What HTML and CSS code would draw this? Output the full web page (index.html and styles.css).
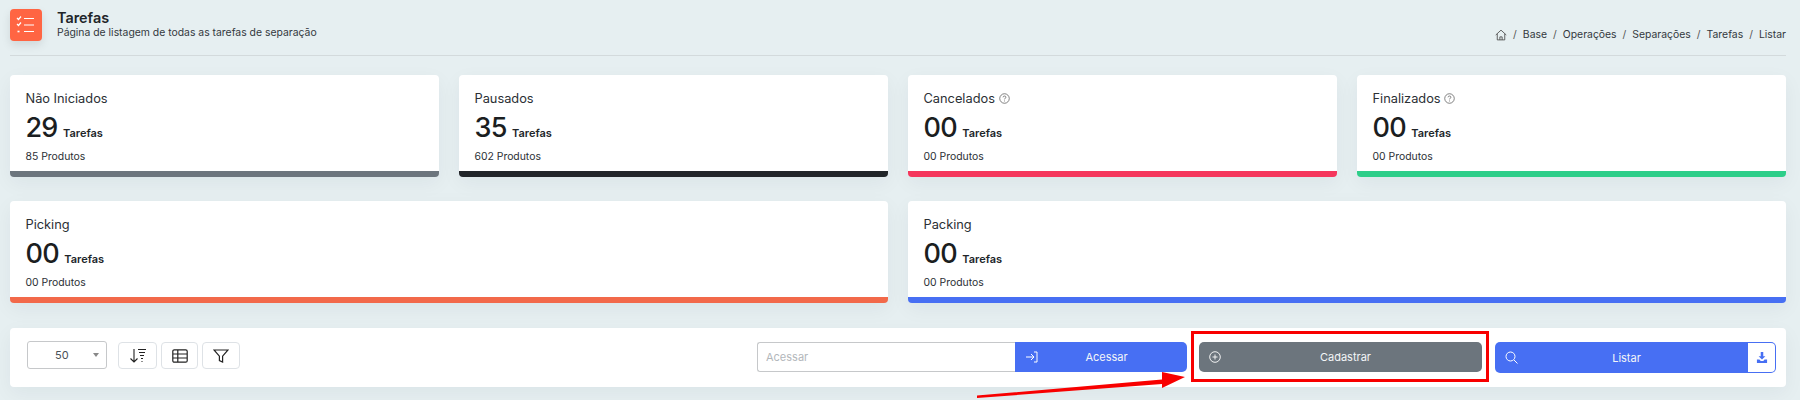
FILE: index.html
```html
<!DOCTYPE html>
<html lang="pt-BR">
<head>
<meta charset="utf-8">
<title>Tarefas</title>
<link rel="stylesheet" href="styles.css">
</head>
<body>
<main class="page">
  <header class="head">
    <div class="head-icon">
      <svg width="20" height="20" viewBox="0 0 20 20" fill="none" stroke="#fff" stroke-width="1.2">
        <path d="M1 3l1.5 1.5L5 1.5M1 9l1.5 1.5L5 7.5"/>
        <path d="M8 3.5h10M8 10h10M8 16.5h10"/>
        <path d="M1.5 16.5h2" stroke-width="1.6"/>
      </svg>
    </div>
    <div class="head-text">
      <h1>Tarefas</h1>
      <p>Página de listagem de todas as tarefas de separação</p>
    </div>
    <nav class="crumbs">
      <svg width="12" height="12" viewBox="0 0 16 16" fill="none" stroke="#444" stroke-width="1.1"><path d="M1 8l7-6.5L15 8M3 6.5V14.5h10V6.5M6.5 14.5v-4h3v4"/></svg>
      <span class="sep">/</span><span>Base</span>
      <span class="sep">/</span><span>Operações</span>
      <span class="sep">/</span><span>Separações</span>
      <span class="sep">/</span><span>Tarefas</span>
      <span class="sep">/</span><span>Listar</span>
    </nav>
  </header>

  <section class="cards">
    <article class="card bar-gray">
      <h2>Não Iniciados</h2>
      <div class="count"><strong>29</strong><b>Tarefas</b></div>
      <small>85 Produtos</small>
    </article>
    <article class="card bar-black">
      <h2>Pausados</h2>
      <div class="count"><strong>35</strong><b>Tarefas</b></div>
      <small>602 Produtos</small>
    </article>
    <article class="card bar-red">
      <h2>Cancelados <svg class="help" width="11" height="11" viewBox="0 0 12 12" fill="none" stroke="#555" stroke-width=".8"><circle cx="6" cy="6" r="5.2"/><path d="M4.4 4.7C4.4 2.9 7.6 2.9 7.6 4.6 7.6 5.7 6 5.7 6 7M6 8.2v1"/></svg></h2>
      <div class="count"><strong>00</strong><b>Tarefas</b></div>
      <small>00 Produtos</small>
    </article>
    <article class="card bar-green">
      <h2>Finalizados <svg class="help" width="11" height="11" viewBox="0 0 12 12" fill="none" stroke="#555" stroke-width=".8"><circle cx="6" cy="6" r="5.2"/><path d="M4.4 4.7C4.4 2.9 7.6 2.9 7.6 4.6 7.6 5.7 6 5.7 6 7M6 8.2v1"/></svg></h2>
      <div class="count"><strong>00</strong><b>Tarefas</b></div>
      <small>00 Produtos</small>
    </article>
    <article class="card wide bar-orange">
      <h2>Picking</h2>
      <div class="count"><strong>00</strong><b>Tarefas</b></div>
      <small>00 Produtos</small>
    </article>
    <article class="card wide bar-blue">
      <h2>Packing</h2>
      <div class="count"><strong>00</strong><b>Tarefas</b></div>
      <small>00 Produtos</small>
    </article>
  </section>

  <section class="toolbar">
    <div class="tools">
      <div class="select"><span>50</span><i class="caret"></i></div>
      <div class="icon-btns">
        <button class="icon-btn sort" type="button">
          <svg width="18" height="16" viewBox="0 0 18 16" fill="none" stroke="#222" stroke-width="1.1"><path d="M5 1v13M1.5 10.5L5 14l3.5-3.5"/><path d="M9 1.5h8M10 4.5h6M11 7.5h4M12 10.5h2M12.5 13.5h1"/></svg>
        </button>
        <button class="icon-btn grid" type="button">
          <svg width="16" height="14" viewBox="0 0 16 14" fill="none" stroke="#222" stroke-width="1.2"><rect x=".8" y=".8" width="14.4" height="12.4" rx="1.5"/><path d="M1 5h14M1 9h14M5.8 1v12"/></svg>
        </button>
        <button class="icon-btn filter" type="button">
          <svg width="16" height="14" viewBox="0 0 16 14" fill="none" stroke="#222" stroke-width="1.2"><path d="M1 1h14L9.6 7.2V13L6.4 11.5V7.2z"/></svg>
        </button>
      </div>
    </div>
    <div class="access">
      <input class="access-input" type="text" placeholder="Acessar">
      <button class="btn btn-blue access-btn" type="button">
        <svg width="13" height="12" viewBox="0 0 13 12" fill="none" stroke="#fff" stroke-width="1"><path d="M1 6h8M6 3l3 3-3 3M9 1h3v10H9"/></svg>
        <span>Acessar</span>
      </button>
    </div>
    <div class="register">
      <button class="btn btn-gray" type="button">
        <svg width="12" height="12" viewBox="0 0 12 12" fill="none" stroke="#fff" stroke-width=".9"><circle cx="6" cy="6" r="5.3"/><path d="M6 3.5v5M3.5 6h5"/></svg>
        <span>Cadastrar</span>
      </button>
    </div>
    <div class="listing">
      <button class="btn btn-blue list-btn" type="button">
        <svg width="13" height="13" viewBox="0 0 13 13" fill="none" stroke="#fff" stroke-width="1"><circle cx="5.5" cy="5.5" r="4.5"/><path d="M9 9l3.5 3.5"/></svg>
        <span>Listar</span>
      </button>
      <button class="download" type="button">
        <svg width="12" height="11" viewBox="0 0 12 13" fill="#476ff3"><path d="M4.5 0h3v5H10L6 9 2 5h2.5z"/><path d="M0 9h3l1.5 1.5h3L9 9h3v4H0z"/></svg>
      </button>
    </div>
    <div class="highlight"></div>
    <svg class="arrow" width="215" height="30" viewBox="0 0 215 30"><path d="M0 25.5L185 9.5 185 2 208 7 185 18 185 14 0 28z" fill="#f80000"/></svg>
  </section>
</main>
</body>
</html>
```
FILE: styles.css
```css
* { box-sizing: border-box; }
html, body { margin: 0; height: 400px; overflow: hidden; }
body {
  background: #e6eff1;
  font-family: Inter, "Liberation Sans", sans-serif;
  color: #212529;
}
.page { padding: 9px 14px 0 10px; }

.head {
  display: flex;
  height: 47px;
  border-bottom: 1px solid #d3dadc;
}
.head-icon {
  width: 32px;
  height: 32px;
  background: #ff6543;
  border-radius: 4px;
  box-shadow: 0 4px 10px rgba(0, 0, 0, .1);
  display: flex;
  align-items: center;
  justify-content: center;
}
.head-text { margin-left: 15px; }
.head-text h1 { margin: 0; font-size: 14.4px; line-height: 17px; font-weight: 600; color: #212529; }
.head-text p { margin: 0; font-size: 10.4px; line-height: 14px; color: #33383d; }

.crumbs {
  margin-left: auto;
  display: flex;
  align-items: center;
  align-self: flex-start;
  margin-top: 19px;
  gap: 6px;
  font-size: 10.4px;
  line-height: 14px;
  color: #33383d;
}
.sep { color: #555; }

.cards {
  display: grid;
  grid-template-columns: repeat(4, 1fr);
  gap: 24px 20px;
  margin-top: 19px;
}
.card {
  height: 102px;
  background: #fff;
  border-radius: 4px;
  border-bottom: 6px solid;
  padding: 15px 15.5px 0;
  box-shadow: 0 6px 20px rgba(0, 40, 60, .05);
}
.wide { grid-column: span 2; }
.bar-gray { border-color: #6c757d; }
.bar-black { border-color: #212529; }
.bar-red { border-color: #f5365c; }
.bar-green { border-color: #2dce89; }
.bar-orange { border-color: #f2694a; }
.bar-blue { border-color: #476ff3; }

.card h2 { margin: 0; font-size: 12.8px; line-height: 17px; font-weight: 400; color: #2b3035; }
.help { vertical-align: -1px; }
.count { display: flex; align-items: baseline; margin-top: 5px; height: 31px; }
.count strong { font-size: 27px; line-height: 31px; font-weight: 500; letter-spacing: -.8px; color: #1b1e21; }
.count b { font-size: 11px; font-weight: 600; margin-left: 5.5px; color: #212529; }
.card small { display: block; margin-top: 7px; font-size: 10.4px; line-height: 14px; color: #2b3035; }

.toolbar {
  position: relative;
  margin-top: 25px;
  height: 59px;
  background: #fff;
  border-radius: 4px;
  box-shadow: 0 6px 20px rgba(0, 40, 60, .05);
  display: flex;
  align-items: flex-start;
  padding: 14px 10px 0 17px;
}
.tools { display: flex; width: 730px; margin-top: -1px; }
.select {
  width: 80px;
  height: 28px;
  border: 1px solid #c6c8ca;
  border-radius: 3px;
  display: flex;
  align-items: center;
  font-size: 11px;
  color: #495057;
  padding-left: 27px;
}
.caret {
  margin-left: 24px;
  width: 0;
  height: 0;
  border: 3.5px solid transparent;
  border-top: 4px solid #888;
  border-bottom: 0;
}
.icon-btns { display: flex; gap: 4px; margin-left: 11px; padding-top: 1px; }
.icon-btn {
  height: 27px;
  padding: 0;
  background: #fff;
  border: 1px solid #dee2e6;
  border-radius: 4px;
  display: flex;
  align-items: center;
  justify-content: center;
}
.sort { width: 39px; }
.grid { width: 37px; }
.filter { width: 38px; }

.btn {
  display: flex;
  align-items: center;
  border: 0;
  height: 30px;
  padding: 0 10px;
  color: #f4f6f8;
  font: 400 11px Inter, "Liberation Sans", sans-serif;
}
.btn span { flex: 1; text-align: center; }
.btn-blue { background: #476ff3; }
.btn-gray { background: #6c757d; }

.access { display: flex; width: 430px; }
.access-input {
  width: 258px;
  height: 30px;
  border: 1px solid #c6c8ca;
  border-right: 0;
  border-radius: 3px 0 0 3px;
  padding: 0 8px;
  font: 400 11px Inter, "Liberation Sans", sans-serif;
  outline: none;
}
.access-input::placeholder { color: #b3b7bb; }
.access-btn { flex: 1; border-radius: 0 5px 5px 0; padding-right: 12px; }

.register { margin-left: 12px; width: 283px; }
.btn-gray { width: 100%; border-radius: 5px; padding-right: 12px; }

.listing { display: flex; margin-left: 13px; width: 281px; }
.list-btn { flex: 1; height: 31px; border-radius: 5px 0 0 5px; padding-right: 13px; }
.download {
  width: 28px;
  height: 31px;
  padding: 0;
  background: #fff;
  border: 1px solid #476ff3;
  border-left: 0;
  border-radius: 0 5px 5px 0;
  display: flex;
  align-items: center;
  justify-content: center;
}

.highlight {
  position: absolute;
  left: 1181px;
  top: 3px;
  width: 298px;
  height: 51px;
  border: 3px solid #f80000;
}
.arrow {
  position: absolute;
  left: 967px;
  top: 42px;
  overflow: visible;
}
```
